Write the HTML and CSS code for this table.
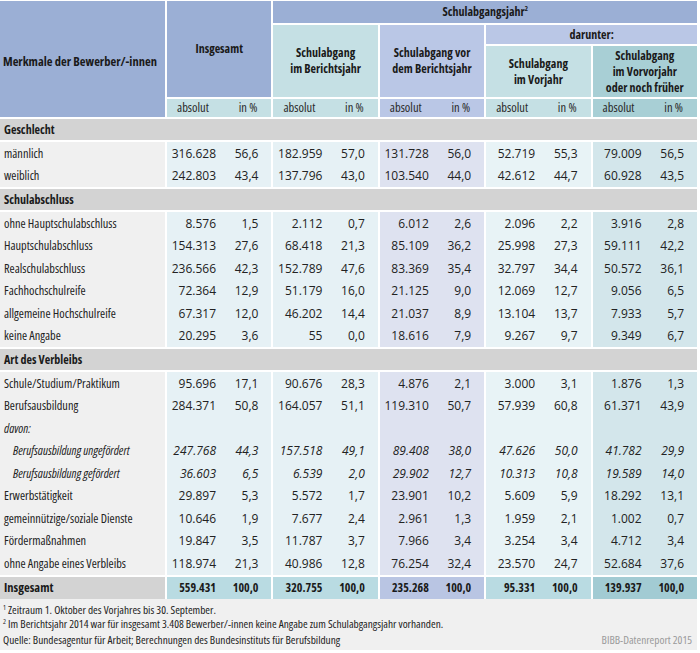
FILE: index.html
```html
<!DOCTYPE html>
<html lang="de">
<head>
<meta charset="utf-8">
<title>Bewerber/-innen nach Schulabgangsjahr</title>
<link rel="stylesheet" href="styles.css">
</head>
<body>
<div class="wrap">
<table class="tbl">
<colgroup>
<col class="col-l">
<col class="col-a"><col class="col-p">
<col class="col-a"><col class="col-p">
<col class="col-a"><col class="col-p">
<col class="col-a"><col class="col-p">
<col class="col-a"><col class="col-p">
</colgroup>
<thead>
<tr class="ha">
<th class="merk" rowspan="4">Merkmale der Bewerber/-innen</th>
<th class="g h-blue" colspan="2" rowspan="3">Insgesamt</th>
<th class="g h-blue hrow-a" colspan="8">Schulabgangsjahr<sup>2</sup></th>
</tr>
<tr class="hb">
<th class="g h-teal" colspan="2" rowspan="2">Schulabgang<br>im Berichtsjahr</th>
<th class="g h-lav" colspan="2" rowspan="2">Schulabgang vor<br>dem Berichtsjahr</th>
<th class="g h-lav hrow-b" colspan="4">darunter:</th>
</tr>
<tr class="hc">
<th class="g h-teal hrow-c" colspan="2">Schulabgang<br>im Vorjahr</th>
<th class="g h-teal2 hrow-c" colspan="2">Schulabgang<br>im Vorvorjahr<br>oder noch früher</th>
</tr>
<tr class="hd">
<th class="g sa h-teal">absolut</th><th class="sp h-teal">in %</th>
<th class="g sa h-teal">absolut</th><th class="sp h-teal">in %</th>
<th class="g sa h-lav">absolut</th><th class="sp h-lav">in %</th>
<th class="g sa h-teal">absolut</th><th class="sp h-teal">in %</th>
<th class="g sa h-teal2">absolut</th><th class="sp h-teal2">in %</th>
</tr>
</thead>
<tbody>
<tr class="sec first"><td colspan="11">Geschlecht</td></tr>
<tr><td class="lbl">männlich</td><td class="g a c1">316.628</td><td class="p c1">56,6</td><td class="g a c2">182.959</td><td class="p c2">57,0</td><td class="g a c3">131.728</td><td class="p c3">56,0</td><td class="g a c4">52.719</td><td class="p c4">55,3</td><td class="g a c5">79.009</td><td class="p c5">56,5</td></tr>
<tr><td class="lbl">weiblich</td><td class="g a c1">242.803</td><td class="p c1">43,4</td><td class="g a c2">137.796</td><td class="p c2">43,0</td><td class="g a c3">103.540</td><td class="p c3">44,0</td><td class="g a c4">42.612</td><td class="p c4">44,7</td><td class="g a c5">60.928</td><td class="p c5">43,5</td></tr>
<tr class="sec"><td colspan="11">Schulabschluss</td></tr>
<tr><td class="lbl">ohne Hauptschulabschluss</td><td class="g a c1">8.576</td><td class="p c1">1,5</td><td class="g a c2">2.112</td><td class="p c2">0,7</td><td class="g a c3">6.012</td><td class="p c3">2,6</td><td class="g a c4">2.096</td><td class="p c4">2,2</td><td class="g a c5">3.916</td><td class="p c5">2,8</td></tr>
<tr><td class="lbl">Hauptschulabschluss</td><td class="g a c1">154.313</td><td class="p c1">27,6</td><td class="g a c2">68.418</td><td class="p c2">21,3</td><td class="g a c3">85.109</td><td class="p c3">36,2</td><td class="g a c4">25.998</td><td class="p c4">27,3</td><td class="g a c5">59.111</td><td class="p c5">42,2</td></tr>
<tr><td class="lbl">Realschulabschluss</td><td class="g a c1">236.566</td><td class="p c1">42,3</td><td class="g a c2">152.789</td><td class="p c2">47,6</td><td class="g a c3">83.369</td><td class="p c3">35,4</td><td class="g a c4">32.797</td><td class="p c4">34,4</td><td class="g a c5">50.572</td><td class="p c5">36,1</td></tr>
<tr><td class="lbl">Fachhochschulreife</td><td class="g a c1">72.364</td><td class="p c1">12,9</td><td class="g a c2">51.179</td><td class="p c2">16,0</td><td class="g a c3">21.125</td><td class="p c3">9,0</td><td class="g a c4">12.069</td><td class="p c4">12,7</td><td class="g a c5">9.056</td><td class="p c5">6,5</td></tr>
<tr><td class="lbl">allgemeine Hochschulreife</td><td class="g a c1">67.317</td><td class="p c1">12,0</td><td class="g a c2">46.202</td><td class="p c2">14,4</td><td class="g a c3">21.037</td><td class="p c3">8,9</td><td class="g a c4">13.104</td><td class="p c4">13,7</td><td class="g a c5">7.933</td><td class="p c5">5,7</td></tr>
<tr><td class="lbl">keine Angabe</td><td class="g a c1">20.295</td><td class="p c1">3,6</td><td class="g a c2">55</td><td class="p c2">0,0</td><td class="g a c3">18.616</td><td class="p c3">7,9</td><td class="g a c4">9.267</td><td class="p c4">9,7</td><td class="g a c5">9.349</td><td class="p c5">6,7</td></tr>
<tr class="sec"><td colspan="11">Art des Verbleibs</td></tr>
<tr><td class="lbl">Schule/Studium/Praktikum</td><td class="g a c1">95.696</td><td class="p c1">17,1</td><td class="g a c2">90.676</td><td class="p c2">28,3</td><td class="g a c3">4.876</td><td class="p c3">2,1</td><td class="g a c4">3.000</td><td class="p c4">3,1</td><td class="g a c5">1.876</td><td class="p c5">1,3</td></tr>
<tr><td class="lbl">Berufsausbildung</td><td class="g a c1">284.371</td><td class="p c1">50,8</td><td class="g a c2">164.057</td><td class="p c2">51,1</td><td class="g a c3">119.310</td><td class="p c3">50,7</td><td class="g a c4">57.939</td><td class="p c4">60,8</td><td class="g a c5">61.371</td><td class="p c5">43,9</td></tr>
<tr class="it"><td class="lbl">davon:</td><td class="g a c1"></td><td class="p c1"></td><td class="g a c2"></td><td class="p c2"></td><td class="g a c3"></td><td class="p c3"></td><td class="g a c4"></td><td class="p c4"></td><td class="g a c5"></td><td class="p c5"></td></tr>
<tr class="it"><td class="lbl sub">Berufsausbildung ungefördert</td><td class="g a c1">247.768</td><td class="p c1">44,3</td><td class="g a c2">157.518</td><td class="p c2">49,1</td><td class="g a c3">89.408</td><td class="p c3">38,0</td><td class="g a c4">47.626</td><td class="p c4">50,0</td><td class="g a c5">41.782</td><td class="p c5">29,9</td></tr>
<tr class="it"><td class="lbl sub">Berufsausbildung gefördert</td><td class="g a c1">36.603</td><td class="p c1">6,5</td><td class="g a c2">6.539</td><td class="p c2">2,0</td><td class="g a c3">29.902</td><td class="p c3">12,7</td><td class="g a c4">10.313</td><td class="p c4">10,8</td><td class="g a c5">19.589</td><td class="p c5">14,0</td></tr>
<tr><td class="lbl">Erwerbstätigkeit</td><td class="g a c1">29.897</td><td class="p c1">5,3</td><td class="g a c2">5.572</td><td class="p c2">1,7</td><td class="g a c3">23.901</td><td class="p c3">10,2</td><td class="g a c4">5.609</td><td class="p c4">5,9</td><td class="g a c5">18.292</td><td class="p c5">13,1</td></tr>
<tr><td class="lbl">gemeinnützige/soziale Dienste</td><td class="g a c1">10.646</td><td class="p c1">1,9</td><td class="g a c2">7.677</td><td class="p c2">2,4</td><td class="g a c3">2.961</td><td class="p c3">1,3</td><td class="g a c4">1.959</td><td class="p c4">2,1</td><td class="g a c5">1.002</td><td class="p c5">0,7</td></tr>
<tr><td class="lbl">Fördermaßnahmen</td><td class="g a c1">19.847</td><td class="p c1">3,5</td><td class="g a c2">11.787</td><td class="p c2">3,7</td><td class="g a c3">7.966</td><td class="p c3">3,4</td><td class="g a c4">3.254</td><td class="p c4">3,4</td><td class="g a c5">4.712</td><td class="p c5">3,4</td></tr>
<tr><td class="lbl">ohne Angabe eines Verbleibs</td><td class="g a c1">118.974</td><td class="p c1">21,3</td><td class="g a c2">40.986</td><td class="p c2">12,8</td><td class="g a c3">76.254</td><td class="p c3">32,4</td><td class="g a c4">23.570</td><td class="p c4">24,7</td><td class="g a c5">52.684</td><td class="p c5">37,6</td></tr>
<tr class="tot"><td class="lbl">Insgesamt</td><td class="g a c1">559.431</td><td class="p c1">100,0</td><td class="g a c2">320.755</td><td class="p c2">100,0</td><td class="g a c3">235.268</td><td class="p c3">100,0</td><td class="g a c4">95.331</td><td class="p c4">100,0</td><td class="g a c5">139.937</td><td class="p c5">100,0</td></tr>
</tbody>
</table>
<div class="foot">
<p class="fn"><sup>1</sup> Zeitraum 1. Oktober des Vorjahres bis 30. September.</p>
<p class="fn"><sup>2</sup> Im Berichtsjahr 2014 war für insgesamt 3.408 Bewerber/-innen keine Angabe zum Schulabgangsjahr vorhanden.</p>
<div class="src"><span>Quelle: Bundesagentur für Arbeit; Berechnungen des Bundesinstituts für Berufsbildung</span><span class="brand">BIBB-Datenreport 2015</span></div>
</div>
</div>
</body>
</html>
```
FILE: styles.css
```css
* { box-sizing: border-box; }
html, body { margin: 0; padding: 0; background: #fff; }
body {
  font-family: "Open Sans", "DejaVu Sans Condensed", sans-serif;
  font-stretch: 75%;
  color: #222;
}
.wrap { width: 697px; padding-top: 1px; }
.tbl {
  width: 697px;
  table-layout: fixed;
  border-collapse: separate;
  border-spacing: 0;
}
.col-l { width: 165px; }
.col-a { width: 61px; }
.col-p { width: 45.4px; }
.tbl th, .tbl td { padding: 0; vertical-align: middle; }

/* header */
.tbl th {
  font-size: 12px;
  line-height: 16px;
  font-weight: bold;
  text-align: center;
  color: #1a1a1a;
  border-bottom: 2px solid #fff;
}
.tbl .g { border-left: 2px solid #fff; }
.tbl th.merk {
  background: #9bafd5;
  text-align: left;
  padding-left: 3px;
  padding-top: 6px;
  font-size: 12.5px;
}
.h-blue { background: #9bafd5; }
.h-lav { background: #bac7e6; }
.h-teal { background: #c5e0e4; }
.h-teal2 { background: #a8cfd5; }
.hrow-a { height: 24px; }
.hrow-b { height: 21px; }
.hrow-c { height: 53px; }
.tbl .hd th { height: 20px; font-weight: normal; font-size: 12.5px; color: #2a2a2a; }
.tbl th.sa { text-align: left; padding-left: 10px; }
.tbl th.sp { text-align: right; padding-right: 14px; }
.tbl sup { font-size: 7px; vertical-align: 5px; line-height: 0; }

/* body */
.tbl td { height: 22.5px; font-size: 12.3px; }
.tbl td.lbl {
  background: #f0f0f0;
  padding-left: 4px;
  white-space: nowrap;
}
.tbl td.sub { padding-left: 13px; }
.tbl td.a, .tbl td.p {
  text-align: right;
  font-size: 12px;
  font-stretch: 100%;
}
.tbl td.a { padding-right: 10px; }
.tbl td.p { padding-right: 13px; }
.c1, .c2 { background: #e6f1f5; }
.c3 { background: #dee2f0; }
.c4 { background: #e8f3f6; }
.c5 { background: #d3e6eb; }
.it td { font-style: italic; }

.tbl .sec td {
  background: #d3d3d3;
  font-weight: bold;
  font-size: 12px;
  padding-left: 4px;
  height: 25px;
  border-top: 2px solid #fff;
  border-bottom: 2px solid #fff;
  color: #1a1a1a;
}
.tbl .sec.first td { border-top: 0; height: 23px; }

.tbl .tot td { height: 24px; border-top: 2px solid #fff; font-weight: bold; color: #1a1a1a; }
.tbl .tot td.lbl { background: #d3d3d3; font-size: 12.5px; }
.tbl .tot td.a, .tbl .tot td.p { font-stretch: 87.5%; }
.tot .c1, .tot .c2, .tot .c4 { background: #b9dbe2; }
.tot .c3 { background: #b9c5e3; }
.tot .c5 { background: #a2cbd3; }

/* footer */
.foot {
  background: #f0f0f0;
  padding: 4px 3px 3px 3px;
  font-size: 11.3px;
  color: #222;
}
.fn { margin: 0; line-height: 14px; }
.fn sup { font-size: 7px; vertical-align: 4px; line-height: 0; }
.src { display: flex; justify-content: space-between; line-height: 14px; margin-top: 2px; padding-right: 2px; }
.brand { color: #9a9a9a; }
```
